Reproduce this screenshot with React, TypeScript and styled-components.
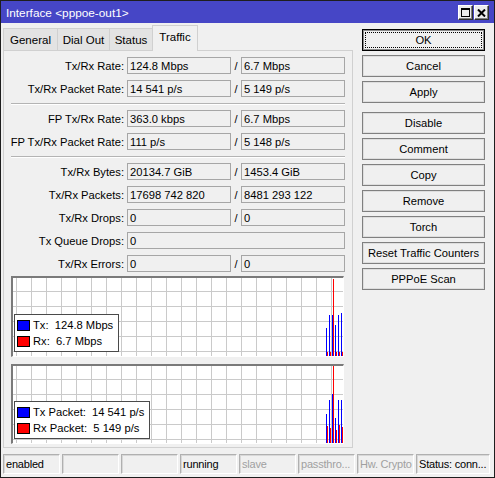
import React from 'react';
import styled, { createGlobalStyle } from 'styled-components';

const GlobalStyle = createGlobalStyle`
  html, body { margin: 0; padding: 0; background: #f0f0f0; }
  body { font-family: "Liberation Sans", Arial, sans-serif; font-size: 11px; color: #000; }
  * { box-sizing: border-box; }
`;

const Window = styled.div`
  width: 495px;
  height: 478px;
  border: 1px solid #1e1e1e;
  background: #f0f0f0;
  display: flex;
  flex-direction: column;
  overflow: hidden;
`;

const TitleBar = styled.div`
  height: 22px;
  flex: none;
  background: #4646c6;
  color: #fff;
  display: flex;
  align-items: center;
  justify-content: space-between;
  padding: 0 5px;
  font-size: 11.8px;
`;

const TitleText = styled.span`
  padding-top: 1px;
`;

const TitleButtons = styled.div`
  display: flex;
  gap: 1px;
  padding-top: 1px;
`;

const TitleButton = styled.div`
  width: 15px;
  height: 15px;
  background: #ececec;
  border: 1px solid;
  border-color: #ffffff #303030 #303030 #ffffff;
  box-shadow: inset -1px -1px 0 #808080;
  display: flex;
  align-items: center;
  justify-content: center;
`;

const Main = styled.div`
  height: 431px;
  flex: none;
  display: flex;
  padding: 2px 0 0 2px;
`;

const LeftCol = styled.div`
  width: 350px;
  display: flex;
  flex-direction: column;
`;

const TabStrip = styled.div`
  height: 25px;
  display: flex;
  align-items: flex-end;
  position: relative;
  z-index: 1;
`;

const Tab = styled.div<{ $active?: boolean; $w: number }>`
  width: ${(p) => p.$w}px;
  height: ${(p) => (p.$active ? 26 : 22)}px;
  margin-bottom: ${(p) => (p.$active ? -1 : 0)}px;
  margin-left: -1px;
  &:first-child { margin-left: 0; }
  background: ${(p) => (p.$active ? '#f0f0f0' : '#e3e3e3')};
  border: 1px solid #d0d0d0;
  border-bottom: none;
  display: flex;
  align-items: center;
  justify-content: center;
  padding-bottom: ${(p) => (p.$active ? 3 : 0)}px;
  font-size: 11.5px;
`;

const Panel = styled.div`
  height: 398px;
  border: 1px solid #d0d0d0;
  background: #f0f0f0;
  padding: 6px 0 0 0;
  display: flex;
  flex-direction: column;
`;

const Form = styled.div`
  display: flex;
  flex-direction: column;
  gap: 6px;
`;

const Row = styled.div`
  display: flex;
  align-items: center;
  height: 17px;
`;

const Label = styled.div`
  width: 120px;
  margin-right: 3px;
  text-align: right;
  white-space: nowrap;
  font-size: 11.2px;
`;

const Field = styled.div<{ $w?: number }>`
  width: ${(p) => p.$w ?? 104}px;
  height: 17px;
  border: 1px solid #a6a6a6;
  background: #f0f0f0;
  padding-left: 2px;
  display: flex;
  align-items: center;
  white-space: nowrap;
  overflow: hidden;
  font-size: 11.2px;
`;

const Slash = styled.div`
  width: 10px;
  text-align: center;
`;

const Divider = styled.div`
  margin: 0 0 -1px 7px;
  width: 334px;
  height: 2px;
  border-top: 1px solid #b4b4b4;
  border-bottom: 1px solid #ffffff;
`;

const Charts = styled.div`
  margin: 4px 0 0 7px;
  display: flex;
  flex-direction: column;
  gap: 7px;
`;

const Chart = styled.div<{ $h: number }>`
  position: relative;
  width: 333px;
  height: ${(p) => p.$h}px;
  border-style: solid;
  border-width: 2px 1px 1px 2px;
  border-color: #7a7a7a #ffffff #ffffff #7a7a7a;
  background: #fff;
  svg { display: block; }
`;

const Legend = styled.div`
  position: absolute;
  left: 1px;
  bottom: 4px;
  background: #fff;
  border: 1px solid #4a4a4a;
  padding: 2px 5px 2px 2px;
  display: flex;
  flex-direction: column;
`;

const LegendRow = styled.div`
  height: 16px;
  display: flex;
  align-items: center;
  gap: 3px;
  white-space: pre;
  font-size: 11.2px;
`;

const Swatch = styled.div<{ $c: string }>`
  width: 13px;
  height: 11px;
  border: 1px solid #000;
  background: ${(p) => p.$c};
`;

const RightCol = styled.div`
  margin-left: 9px;
  width: 123px;
  padding-top: 4px;
  display: flex;
  flex-direction: column;
  gap: 4px;
`;

const Button = styled.div<{ $default?: boolean; $gapBefore?: boolean }>`
  position: relative;
  height: 22px;
  margin-top: ${(p) => (p.$gapBefore ? 5 : 0)}px;
  border: 1px solid ${(p) => (p.$default ? '#000' : '#808080')};
  box-shadow: inset 0 0 0 1px ${(p) => (p.$default ? '#8a8a8a' : '#dedede')};
  background: #f0f0f0;
  display: flex;
  align-items: center;
  justify-content: center;
  font-size: 11.2px;
  white-space: nowrap;
  &::after {
    content: '';
    display: ${(p) => (p.$default ? 'block' : 'none')};
    position: absolute;
    inset: 2px;
    border: 1px dotted #000;
  }
`;

const StatusBar = styled.div`
  height: 20px;
  flex: none;
  display: flex;
  gap: 2px;
  padding-left: 2px;
`;

const Cell = styled.div<{ $w: number; $dim?: boolean }>`
  width: ${(p) => p.$w}px;
  height: 20px;
  border: 1px solid;
  border-color: #b0b0b0 #ffffff #ffffff #b0b0b0;
  box-shadow: 1px 1px 0 #d8d8d8 inset;
  padding-left: 2px;
  display: flex;
  align-items: center;
  white-space: nowrap;
  overflow: hidden;
  color: ${(p) => (p.$dim ? '#a0a0a0' : '#000')};
  font-size: 11px;
  letter-spacing: -0.2px;
`;

type Bar = { x: number; top: number; c: string };

const ChartSvg: React.FC<{ w: number; h: number; bars: Bar[] }> = ({ w, h, bars }) => {
  const vs: number[] = [];
  for (let x = 3; x < w; x += 15) vs.push(x);
  const hs: number[] = [];
  for (let y = 13; y < h; y += 15) hs.push(y);
  return (
    <svg width={w} height={h} shapeRendering="crispEdges">
      {vs.map((x) => (
        <rect key={'v' + x} x={x} y={0} width={1} height={h} fill="#cacaca" />
      ))}
      {hs.map((y) => (
        <rect key={'h' + y} x={0} y={y} width={w} height={1} fill="#cacaca" />
      ))}
      {bars.map((b, i) => (
        <rect key={i} x={b.x} y={b.top} width={1} height={h - b.top} fill={b.c} />
      ))}
    </svg>
  );
};

const B = '#0000ff';
const R = '#ff0000';

const bars1: Bar[] = [
  { x: 313, top: 50, c: B },
  { x: 316, top: 37, c: B },
  { x: 319, top: 37, c: B },
  { x: 322, top: 47, c: B },
  { x: 325, top: 37, c: B },
  { x: 328, top: 35, c: B },
  { x: 320, top: 1, c: R },
  { x: 314, top: 74, c: R },
  { x: 317, top: 74, c: R },
  { x: 323, top: 74, c: R },
  { x: 326, top: 74, c: R },
  { x: 329, top: 74, c: R },
];

const bars2: Bar[] = [
  { x: 313, top: 48, c: B },
  { x: 316, top: 34, c: B },
  { x: 319, top: 28, c: B },
  { x: 322, top: 52, c: B },
  { x: 325, top: 34, c: B },
  { x: 328, top: 34, c: B },
  { x: 320, top: 0, c: R },
  { x: 314, top: 60, c: R },
  { x: 317, top: 62, c: R },
  { x: 323, top: 64, c: R },
  { x: 326, top: 59, c: R },
  { x: 329, top: 61, c: R },
];

type FormRow = { label: string; a: string; b?: string };

const group1: FormRow[] = [
  { label: 'Tx/Rx Rate:', a: '124.8 Mbps', b: '6.7 Mbps' },
  { label: 'Tx/Rx Packet Rate:', a: '14 541 p/s', b: '5 149 p/s' },
];
const group2: FormRow[] = [
  { label: 'FP Tx/Rx Rate:', a: '363.0 kbps', b: '6.7 Mbps' },
  { label: 'FP Tx/Rx Packet Rate:', a: '111 p/s', b: '5 148 p/s' },
];
const group3: FormRow[] = [
  { label: 'Tx/Rx Bytes:', a: '20134.7 GiB', b: '1453.4 GiB' },
  { label: 'Tx/Rx Packets:', a: '17698 742 820', b: '8481 293 122' },
  { label: 'Tx/Rx Drops:', a: '0', b: '0' },
  { label: 'Tx Queue Drops:', a: '0' },
  { label: 'Tx/Rx Errors:', a: '0', b: '0' },
];

const renderRow = (r: FormRow) => (
  <Row key={r.label}>
    <Label>{r.label}</Label>
    {r.b !== undefined ? (
      <>
        <Field>{r.a}</Field>
        <Slash>/</Slash>
        <Field>{r.b}</Field>
      </>
    ) : (
      <Field $w={218}>{r.a}</Field>
    )}
  </Row>
);

const tabs = [
  { label: 'General', w: 55 },
  { label: 'Dial Out', w: 53 },
  { label: 'Status', w: 44 },
  { label: 'Traffic', w: 46, active: true },
];

const buttons = [
  { label: 'OK', def: true },
  { label: 'Cancel' },
  { label: 'Apply' },
  { label: 'Disable', gap: true },
  { label: 'Comment' },
  { label: 'Copy' },
  { label: 'Remove' },
  { label: 'Torch' },
  { label: 'Reset Traffic Counters' },
  { label: 'PPPoE Scan' },
];

const cells = [
  { t: 'enabled', w: 57 },
  { t: '', w: 57 },
  { t: '', w: 57 },
  { t: 'running', w: 57 },
  { t: 'slave', w: 57, dim: true },
  { t: 'passthro...', w: 57, dim: true },
  { t: 'Hw. Crypto', w: 57, dim: true },
  { t: 'Status: conn...', w: 74 },
];

export default function App() {
  return (
    <>
      <GlobalStyle />
      <Window>
        <TitleBar>
          <TitleText>Interface &lt;pppoe-out1&gt;</TitleText>
          <TitleButtons>
            <TitleButton>
              <svg width="9" height="9" viewBox="0 0 9 9" shapeRendering="crispEdges">
                <rect x="0.5" y="0.5" width="8" height="8" fill="none" stroke="#000" />
                <rect x="0" y="0" width="9" height="2" fill="#000" />
              </svg>
            </TitleButton>
            <TitleButton>
              <svg width="9" height="8" viewBox="0 0 9 8">
                <path d="M1 0.5 L8 7.5 M8 0.5 L1 7.5" stroke="#000" strokeWidth="2" />
              </svg>
            </TitleButton>
          </TitleButtons>
        </TitleBar>
        <Main>
          <LeftCol>
            <TabStrip>
              {tabs.map((t) => (
                <Tab key={t.label} $w={t.w} $active={t.active}>
                  {t.label}
                </Tab>
              ))}
            </TabStrip>
            <Panel>
              <Form>
                {group1.map(renderRow)}
                <Divider />
                {group2.map(renderRow)}
                <Divider />
                {group3.map(renderRow)}
              </Form>
              <Charts>
                <Chart $h={81}>
                  <ChartSvg w={330} h={78} bars={bars1} />
                  <Legend>
                    <LegendRow>
                      <Swatch $c={B} />
                      {'Tx:  124.8 Mbps'}
                    </LegendRow>
                    <LegendRow>
                      <Swatch $c={R} />
                      {'Rx:  6.7 Mbps'}
                    </LegendRow>
                  </Legend>
                </Chart>
                <Chart $h={80}>
                  <ChartSvg w={330} h={77} bars={bars2} />
                  <Legend>
                    <LegendRow>
                      <Swatch $c={B} />
                      {'Tx Packet:  14 541 p/s'}
                    </LegendRow>
                    <LegendRow>
                      <Swatch $c={R} />
                      {'Rx Packet:  5 149 p/s'}
                    </LegendRow>
                  </Legend>
                </Chart>
              </Charts>
            </Panel>
          </LeftCol>
          <RightCol>
            {buttons.map((b) => (
              <Button key={b.label} $default={b.def} $gapBefore={b.gap}>
                {b.label}
              </Button>
            ))}
          </RightCol>
        </Main>
        <StatusBar>
          {cells.map((c, i) => (
            <Cell key={i} $w={c.w} $dim={c.dim}>
              {c.t}
            </Cell>
          ))}
        </StatusBar>
      </Window>
    </>
  );
}
